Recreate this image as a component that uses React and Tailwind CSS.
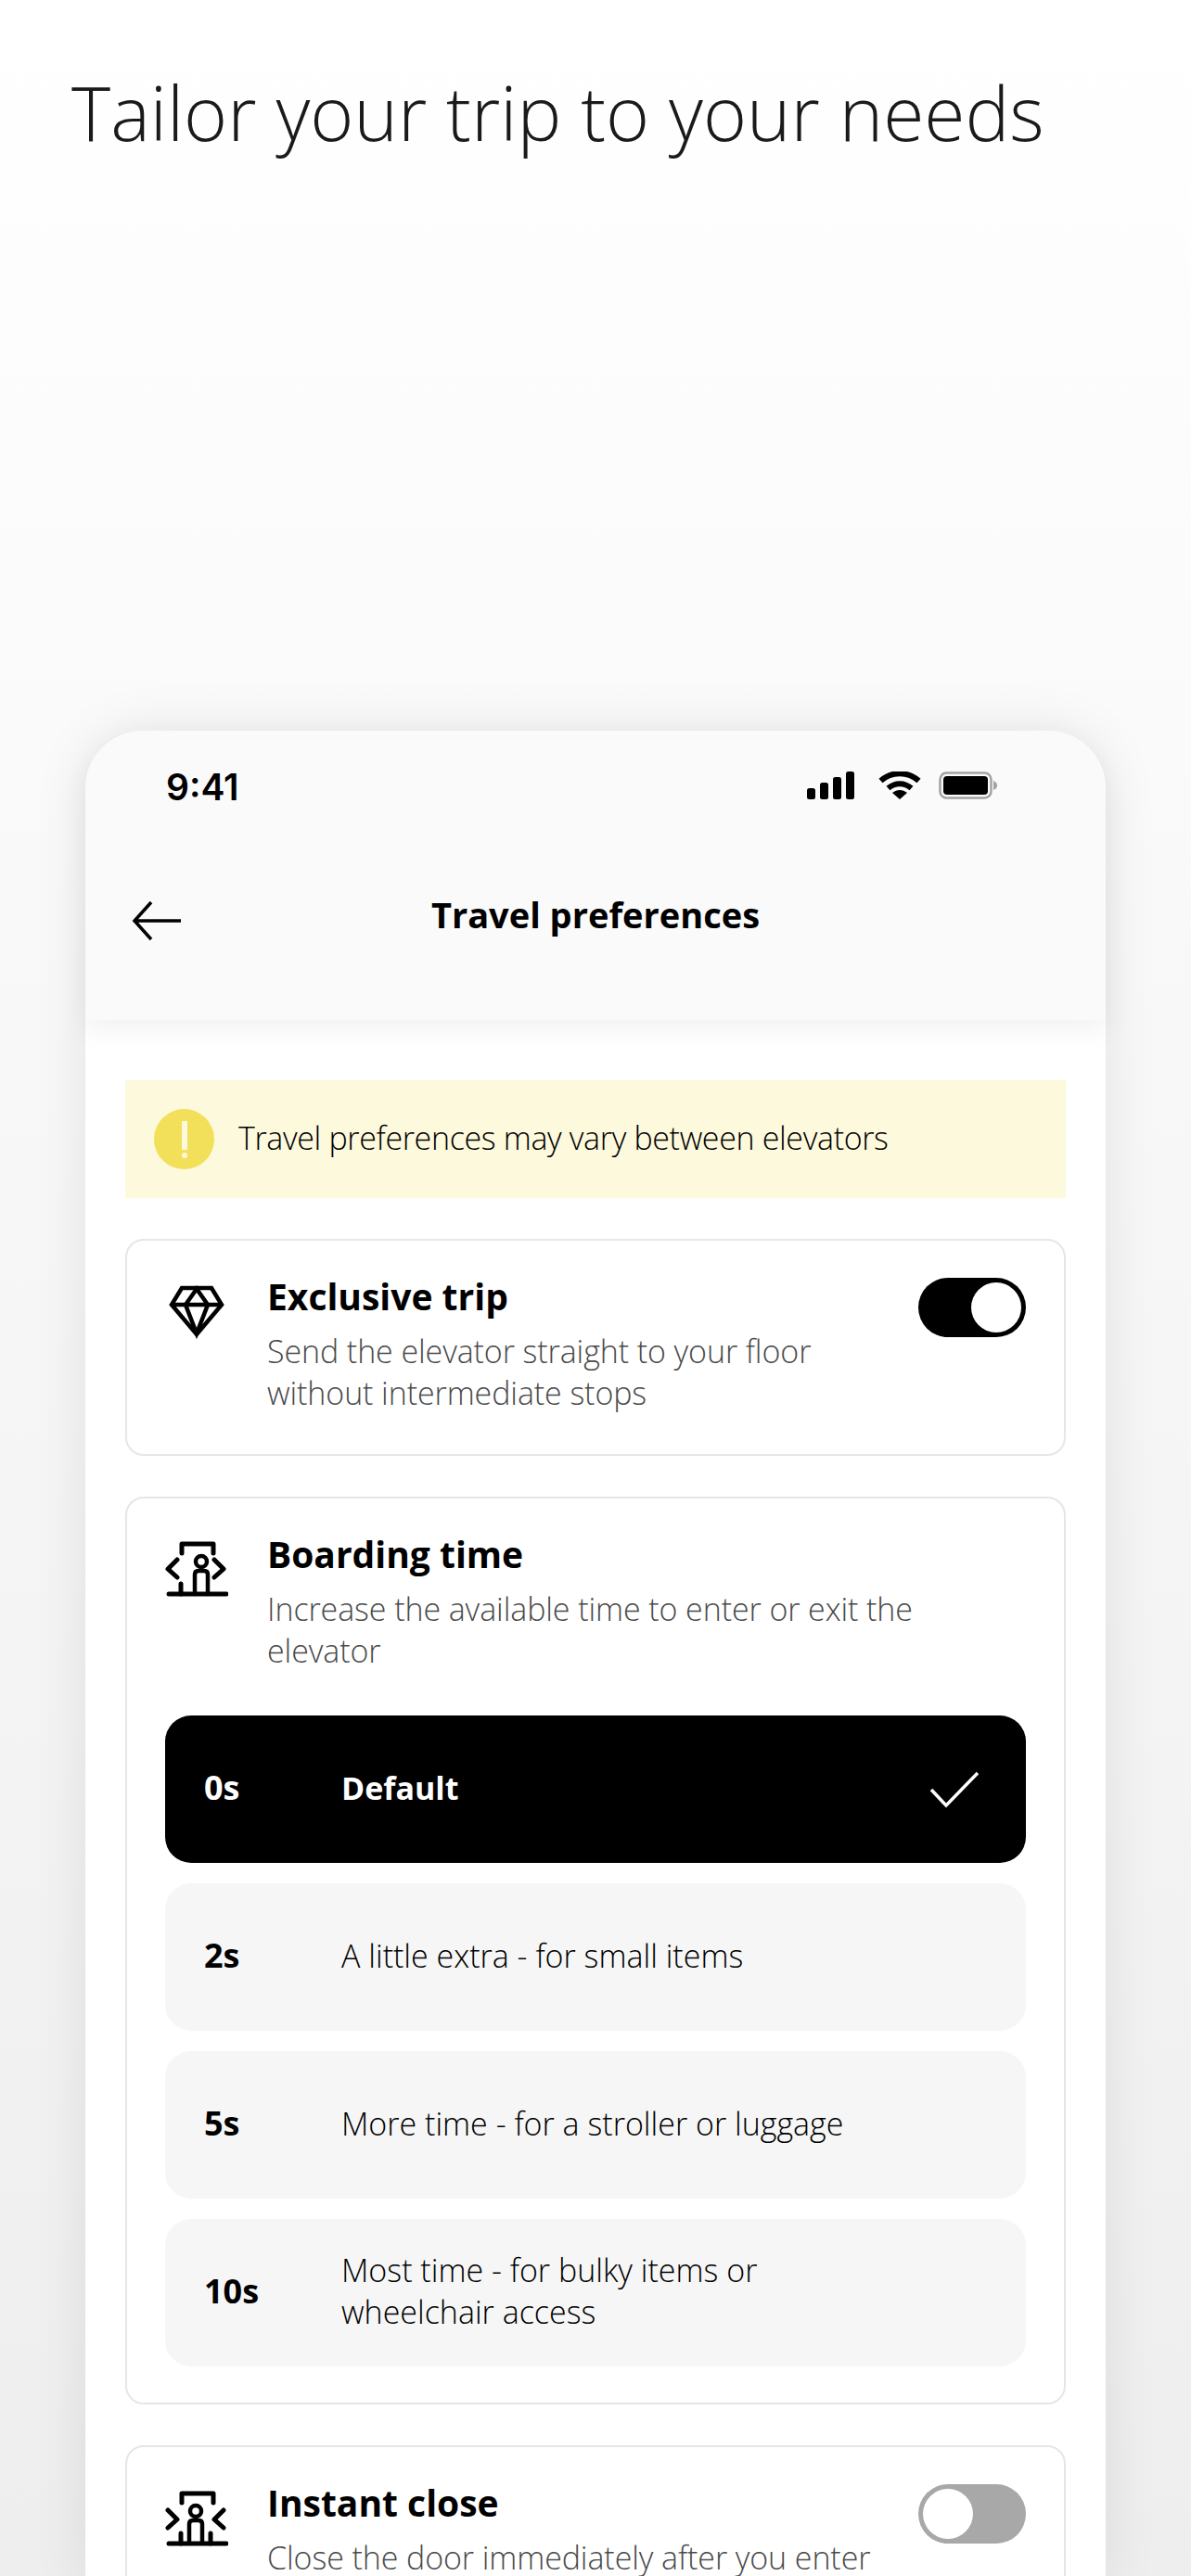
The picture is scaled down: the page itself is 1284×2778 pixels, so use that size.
const SANS = "font-['Open_Sans','Noto_Sans',sans-serif]";

const options = [
  { time: "0s", label: "Default", selected: true },
  { time: "2s", label: "A little extra - for small items" },
  { time: "5s", label: "More time - for a stroller or luggage" },
  { time: "10s", label: "Most time - for bulky items or wheelchair access" },
];

const DiamondIcon = () => (
  <svg width="68" height="66" viewBox="0 0 68 66" fill="none" stroke="#000" strokeWidth="4.5" strokeLinejoin="miter">
    <path d="M18 8H50L61 26L34 58L7 26L18 8Z" />
    <path d="M7 26H61M34 9L22 26L34 57L46 26L34 9Z" />
  </svg>
);

const BoardingIcon = () => (
  <svg width="68" height="66" viewBox="8 10 68 66" fill="none" stroke="#000" strokeWidth="5" strokeLinecap="round" strokeLinejoin="round">
    <path d="M26 26V16H60V26" />
    <circle cx="47" cy="35" r="6" strokeWidth="4.5" />
    <path d="M40 70V49C40 46 42 45 44 45H50C52 45 54 46 54 49V70" strokeWidth="4.5" />
    <path d="M21 33L11 43L21 52M61 33L71 43L61 52" />
    <path d="M25 59V70" />
    <path d="M12 70H74" />
  </svg>
);

const CloseIcon = () => (
  <svg width="68" height="66" viewBox="8 7 68 66" fill="none" stroke="#000" strokeWidth="5" strokeLinecap="round" strokeLinejoin="round">
    <path d="M26 24V14H60V24" />
    <circle cx="41" cy="33" r="6" strokeWidth="4.5" />
    <path d="M34 68V47C34 44 36 43 38 43H44C46 43 48 44 48 47V68" strokeWidth="4.5" />
    <path d="M11 32L21 42L11 51M71 32L61 42L71 51" />
    <path d="M25 57V68M57 57V68" />
    <path d="M12 68H74" />
  </svg>
);

const Toggle = ({ on }) => (
  <div className={`w-[116px] h-[64px] rounded-full flex items-center px-[5px] shrink-0 ${on ? "bg-black justify-end" : "bg-[#a8a8a8] justify-start"}`}>
    <div className="w-[54px] h-[54px] rounded-full bg-white" />
  </div>
);

const Card = ({ icon, title, text, right, children }) => (
  <div className="border-2 border-[#e6e6e6] rounded-[20px] bg-white px-[41px] pt-[41px] pb-[41px]">
    <div className="flex items-start">
      <div className="w-[110px] shrink-0 pt-[2px]">{icon}</div>
      <div className="flex-1">
        <h3 className="text-[39px] leading-[44px] -mt-[3px] font-bold text-black">{title}</h3>
        <p className="text-[34px] leading-[45px] tracking-[-0.1px] font-light text-[#4a4a4a] mt-[15px] mb-[2px] w-[702px]">{text}</p>
      </div>
      {right && <div className="-ml-[199px] -mt-[1px]">{right}</div>}
    </div>
    {children}
  </div>
);

const StatusBar = () => (
  <div className="flex items-center justify-between pl-[87px] pr-[116px] pt-[10px] h-[112px]">
    <span className="font-['Inter',sans-serif] font-semibold text-[39px] leading-[50px] text-black">9:41</span>
    <div className="flex items-center -mt-[4px]">
      <svg width="51" height="30" viewBox="0 0 51 30" fill="#000">
        <rect x="0" y="18" width="9" height="12" rx="2.5" />
        <rect x="14" y="12" width="9" height="18" rx="2.5" />
        <rect x="28" y="6" width="9" height="24" rx="2.5" />
        <rect x="42" y="0" width="9" height="30" rx="2.5" />
      </svg>
      <svg className="ml-[26px]" width="46" height="30" viewBox="0 0 46 30" fill="none" stroke="#000" strokeWidth="6">
        <path d="M2.5 10C14 -0.5 32 -0.5 43.5 10" />
        <path d="M10.5 18C18 11.5 28 11.5 35.5 18" />
        <path d="M15 23L23 30L31 23C26 19 20 19 15 23Z" fill="#000" stroke="none" />
      </svg>
      <svg className="ml-[19px]" width="64" height="30" viewBox="0 0 64 30">
        <rect x="1.5" y="1.5" width="55" height="27" rx="7" fill="none" stroke="#a3a3a3" strokeWidth="2.5" />
        <rect x="5" y="5" width="48" height="20" rx="4" fill="#000" />
        <path d="M59 10C62 11 63 13 63 15C63 17 62 19 59 20Z" fill="#a3a3a3" />
      </svg>
    </div>
  </div>
);

const App = () => {
  return (
    <div className={`h-[2778px] overflow-hidden bg-gradient-to-b from-white to-[#eeeeee] ${SANS}`}>
      <h1 className="text-[80.4px] leading-[100px] font-light text-[#1a1a1a] pl-[77px] pt-[71px] whitespace-nowrap">
        Tailor your trip to your needs
      </h1>

      <div className="mx-[92px] mt-[617px] rounded-t-[62px] bg-white shadow-[0_0_60px_rgba(0,0,0,0.09)] h-[2000px]">
        <div className="bg-[#fafafa] rounded-t-[62px] h-[312px] shadow-[0_10px_30px_rgba(0,0,0,0.06)]">
          <StatusBar />
          <div className="relative flex items-center justify-center h-[80px] mt-[46px]">
            <svg className="absolute left-[50px] top-[25px]" width="54" height="44" viewBox="0 0 54 44" fill="none" stroke="#000" strokeWidth="3.5">
              <path d="M21 2L3 22L21 42M3 22H53" />
            </svg>
            <h2 className="text-[38px] leading-[50px] font-bold text-black">Travel preferences</h2>
          </div>
        </div>

        <div className="px-[43px] pt-[65px] flex flex-col gap-[44px]">
          <div className="bg-[#fdf9dc] h-[127px] flex items-center px-[31px]">
            <div className="w-[65px] h-[65px] rounded-full bg-[#f2df5a] flex flex-col items-center justify-center shrink-0">
              <div className="w-[6px] h-[31px] bg-[#fdf9dc]" />
              <div className="w-[6px] h-[6px] rounded-full bg-[#fdf9dc] mt-[3px]" />
            </div>
            <span className="text-[34px] leading-[45px] tracking-[-0.35px] font-light text-black ml-[26px] -mt-[3px]">Travel preferences may vary between elevators</span>
          </div>

          <Card
            icon={<DiamondIcon />}
            title="Exclusive trip"
            text="Send the elevator straight to your floor without intermediate stops"
            right={<Toggle on />}
          />

          <Card
            icon={<BoardingIcon />}
            title="Boarding time"
            text="Increase the available time to enter or exit the elevator"
          >
            <div className="flex flex-col gap-[22px] mt-[45px] -mb-[2px]">
              {options.map((opt) => (
                <div
                  key={opt.time}
                  className={`h-[159px] rounded-[28px] flex items-center pl-[42px] pr-[50px] ${opt.selected ? "bg-black text-white" : "bg-[#f6f6f6] text-black"}`}
                >
                  <span className="w-[148px] text-[36px] font-bold shrink-0 -mt-[3px]">{opt.time}</span>
                  <span className={`text-[34px] leading-[45px] w-[560px] -mt-[3px] ${opt.selected ? "font-bold" : "font-light"}`}>{opt.label}</span>
                  {opt.selected && (
                    <svg className="ml-auto" width="54" height="40" viewBox="0 0 54 40" fill="none" stroke="#fff" strokeWidth="3.5">
                      <path d="M2 20L18 37L52 2" />
                    </svg>
                  )}
                </div>
              ))}
            </div>
          </Card>

          <Card
            icon={<CloseIcon />}
            title="Instant close"
            text="Close the door immediately after you enter the elevator"
            right={<Toggle />}
          />
        </div>
      </div>
    </div>
  );
};

export default App;
